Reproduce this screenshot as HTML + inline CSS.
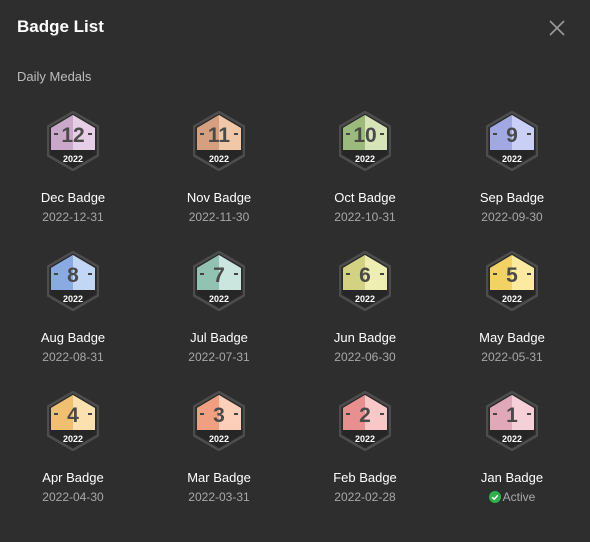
<!DOCTYPE html>
<html><head><meta charset="utf-8"><style>
body{margin:0;width:590px;height:542px;background:#2e2e2e;font-family:"Liberation Sans",sans-serif;overflow:hidden;position:relative}
.t{position:absolute;left:17px;top:17px;color:#fff;font-size:17px;font-weight:bold}
.s{position:absolute;left:17px;top:69px;color:#bdbdbd;font-size:13px}
.x{position:absolute;left:548px;top:19px}
.b{position:absolute;width:140px;text-align:center}
.b>svg{display:block;margin:0 auto}
.n{color:#fff;font-size:13px;margin-top:19px}
.d{color:#a8a8a8;font-size:12px;margin-top:5px}
.a{color:#aaa;font-size:12px;margin-top:5px;display:flex;justify-content:center;align-items:center;gap:2px}
.a svg{display:inline-block;margin:0}
</style></head><body>
<div class="t">Badge List</div>
<svg class="x" width="18" height="18" viewBox="0 0 18 18"><path d="M2 2L16 16M16 2L2 16" stroke="#9a9a9a" stroke-width="1.6"/></svg>
<div class="s">Daily Medals</div>

<svg width="0" height="0" style="position:absolute"><defs>
<g id="frame"><polygon points="26,1 51,15.5 51,44.5 26,59 1,44.5 1,15.5" fill="#2a2a2a" stroke="#4d4d4d" stroke-width="2.5"/></g>
<g id="band"><polygon points="4,39 48,39 48,43 26,56 4,43" fill="#262626"/><text x="26" y="51" text-anchor="middle" font-family="Liberation Sans" font-weight="bold" font-size="9" fill="#fff">2022</text><path d="M7 23h4M41 23h4" stroke="#444" stroke-width="2"/></g>
</defs></svg>

<div class="b" style="left:3px;top:111px"><svg width="52" height="60"><use href="#frame"/><polygon points="26,4 48,17 48,39 4,39 4,17" fill="#e6cfe6"/><polygon points="4,17 26,4 26,39 4,39" fill="#c9a8c9"/><use href="#band"/><text x="26" y="31" text-anchor="middle" font-size="21" font-weight="bold" fill="#4a4a4a">12</text></svg><div class="n">Dec Badge</div><div class="d">2022-12-31</div></div>
<div class="b" style="left:149px;top:111px"><svg width="52" height="60"><use href="#frame"/><polygon points="26,4 48,17 48,39 4,39 4,17" fill="#f0c8a8"/><polygon points="4,17 26,4 26,39 4,39" fill="#d4a080"/><use href="#band"/><text x="26" y="31" text-anchor="middle" font-size="21" font-weight="bold" fill="#4a4a4a">11</text></svg><div class="n">Nov Badge</div><div class="d">2022-11-30</div></div>
<div class="b" style="left:295px;top:111px"><svg width="52" height="60"><use href="#frame"/><polygon points="26,4 48,17 48,39 4,39 4,17" fill="#d6e4b8"/><polygon points="4,17 26,4 26,39 4,39" fill="#9cba7c"/><use href="#band"/><text x="26" y="31" text-anchor="middle" font-size="21" font-weight="bold" fill="#4a4a4a">10</text></svg><div class="n">Oct Badge</div><div class="d">2022-10-31</div></div>
<div class="b" style="left:442px;top:111px"><svg width="52" height="60"><use href="#frame"/><polygon points="26,4 48,17 48,39 4,39 4,17" fill="#cad0f5"/><polygon points="4,17 26,4 26,39 4,39" fill="#a2a8e2"/><use href="#band"/><text x="26" y="31" text-anchor="middle" font-size="21" font-weight="bold" fill="#4a4a4a">9</text></svg><div class="n">Sep Badge</div><div class="d">2022-09-30</div></div>

<div class="b" style="left:3px;top:251px"><svg width="52" height="60"><use href="#frame"/><polygon points="26,4 48,17 48,39 4,39 4,17" fill="#c2d6f5"/><polygon points="4,17 26,4 26,39 4,39" fill="#8aaae2"/><use href="#band"/><text x="26" y="31" text-anchor="middle" font-size="21" font-weight="bold" fill="#4a4a4a">8</text></svg><div class="n">Aug Badge</div><div class="d">2022-08-31</div></div>
<div class="b" style="left:149px;top:251px"><svg width="52" height="60"><use href="#frame"/><polygon points="26,4 48,17 48,39 4,39 4,17" fill="#cae6de"/><polygon points="4,17 26,4 26,39 4,39" fill="#92c2b2"/><use href="#band"/><text x="26" y="31" text-anchor="middle" font-size="21" font-weight="bold" fill="#4a4a4a">7</text></svg><div class="n">Jul Badge</div><div class="d">2022-07-31</div></div>
<div class="b" style="left:295px;top:251px"><svg width="52" height="60"><use href="#frame"/><polygon points="26,4 48,17 48,39 4,39 4,17" fill="#eeeeb2"/><polygon points="4,17 26,4 26,39 4,39" fill="#d2d282"/><use href="#band"/><text x="26" y="31" text-anchor="middle" font-size="21" font-weight="bold" fill="#4a4a4a">6</text></svg><div class="n">Jun Badge</div><div class="d">2022-06-30</div></div>
<div class="b" style="left:442px;top:251px"><svg width="52" height="60"><use href="#frame"/><polygon points="26,4 48,17 48,39 4,39 4,17" fill="#fbeaa0"/><polygon points="4,17 26,4 26,39 4,39" fill="#f2d262"/><use href="#band"/><text x="26" y="31" text-anchor="middle" font-size="21" font-weight="bold" fill="#4a4a4a">5</text></svg><div class="n">May Badge</div><div class="d">2022-05-31</div></div>

<div class="b" style="left:3px;top:391px"><svg width="52" height="60"><use href="#frame"/><polygon points="26,4 48,17 48,39 4,39 4,17" fill="#fbe0b0"/><polygon points="4,17 26,4 26,39 4,39" fill="#f0c070"/><use href="#band"/><text x="26" y="31" text-anchor="middle" font-size="21" font-weight="bold" fill="#4a4a4a">4</text></svg><div class="n">Apr Badge</div><div class="d">2022-04-30</div></div>
<div class="b" style="left:149px;top:391px"><svg width="52" height="60"><use href="#frame"/><polygon points="26,4 48,17 48,39 4,39 4,17" fill="#fcd0b8"/><polygon points="4,17 26,4 26,39 4,39" fill="#f0a080"/><use href="#band"/><text x="26" y="31" text-anchor="middle" font-size="21" font-weight="bold" fill="#4a4a4a">3</text></svg><div class="n">Mar Badge</div><div class="d">2022-03-31</div></div>
<div class="b" style="left:295px;top:391px"><svg width="52" height="60"><use href="#frame"/><polygon points="26,4 48,17 48,39 4,39 4,17" fill="#f8c8c8"/><polygon points="4,17 26,4 26,39 4,39" fill="#e89090"/><use href="#band"/><text x="26" y="31" text-anchor="middle" font-size="21" font-weight="bold" fill="#4a4a4a">2</text></svg><div class="n">Feb Badge</div><div class="d">2022-02-28</div></div>
<div class="b" style="left:442px;top:391px"><svg width="52" height="60"><use href="#frame"/><polygon points="26,4 48,17 48,39 4,39 4,17" fill="#f5d0d8"/><polygon points="4,17 26,4 26,39 4,39" fill="#e0a8b8"/><use href="#band"/><text x="26" y="31" text-anchor="middle" font-size="21" font-weight="bold" fill="#4a4a4a">1</text></svg><div class="n">Jan Badge</div><div class="a"><svg width="12" height="12" viewBox="0 0 12 12"><circle cx="6" cy="6" r="6" fill="#2bb24c"/><path d="M3.2 6.2l2 2 3.6-4" stroke="#fff" stroke-width="1.5" fill="none"/></svg>Active</div></div>
</body></html>
